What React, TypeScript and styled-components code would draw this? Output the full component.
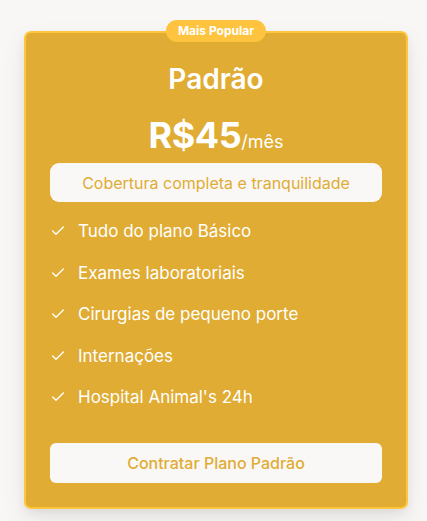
import React from "react";
import styled, { createGlobalStyle } from "styled-components";

const Global = createGlobalStyle`
  html, body { margin: 0; padding: 0; background: #f8f7f6; }
  body { font-family: Inter, "Noto Sans", sans-serif; -webkit-font-smoothing: antialiased; }
`;

const Page = styled.div`
  width: 427px;
  min-height: 521px;
  box-sizing: border-box;
  padding: 31px 19px 0 24px;
  background: #f8f7f6;
`;

const Card = styled.div`
  position: relative;
  width: 384px;
  height: 478px;
  box-sizing: border-box;
  border: 2px solid #ffc53d;
  border-radius: 7px;
  background: #e0ac33;
  padding: 29px 24px 24px;
  display: flex;
  flex-direction: column;
  align-items: stretch;
  box-shadow: 0 10px 25px rgba(0, 0, 0, 0.08), 0 4px 10px rgba(0, 0, 0, 0.05);
`;

const Badge = styled.div`
  position: absolute;
  top: -13px;
  left: 50%;
  transform: translateX(-50%);
  background: #ffc43f;
  color: #fff;
  font-size: 12px;
  font-weight: 700;
  line-height: 22px;
  height: 22px;
  padding: 0 12px;
  border-radius: 11px;
  white-space: nowrap;
`;

const Title = styled.h2`
  margin: 0;
  text-align: center;
  color: #fff;
  font-size: 28px;
  font-weight: 600;
  line-height: 34px;
`;

const Price = styled.div`
  margin-top: 19px;
  text-align: center;
  color: #fff;
  line-height: 40px;
`;

const Amount = styled.span`
  font-size: 36px;
  font-weight: 700;
  letter-spacing: -0.5px;
`;

const Period = styled.span`
  font-size: 18px;
  font-weight: 400;
`;

const Tagline = styled.div`
  margin-top: 1px;
  height: 39px;
  border-radius: 9px;
  background: #faf8f7;
  color: #e0ac33;
  font-size: 16px;
  display: flex;
  align-items: center;
  justify-content: center;
`;

const Features = styled.ul`
  list-style: none;
  margin: 17px 0 0;
  padding: 0;
  display: flex;
  flex-direction: column;
  gap: 17.5px;
`;

const Feature = styled.li`
  display: flex;
  align-items: center;
  gap: 12px;
  color: #fff;
  font-size: 17px;
  line-height: 24px;
`;

const CheckIcon = styled.svg`
  width: 16px;
  height: 16px;
  flex: none;
`;

const Cta = styled.button`
  margin-top: auto;
  height: 40px;
  border: none;
  border-radius: 6px;
  background: #faf8f7;
  color: #e0ac33;
  font-family: Inter, "Noto Sans", sans-serif;
  font-size: 16px;
  font-weight: 500;
  cursor: pointer;
`;

const features = [
  "Tudo do plano Básico",
  "Exames laboratoriais",
  "Cirurgias de pequeno porte",
  "Internações",
  "Hospital Animal's 24h",
];

const Check = () => (
  <CheckIcon viewBox="0 0 24 24" fill="none" stroke="#fff" strokeWidth={2} strokeLinecap="round" strokeLinejoin="round">
    <path d="M20 6 9 17l-5-5" />
  </CheckIcon>
);

export default function App() {
  return (
    <>
      <Global />
      <Page>
        <Card>
          <Badge>Mais Popular</Badge>
          <Title>Padrão</Title>
          <Price>
            <Amount>R$45</Amount>
            <Period>/mês</Period>
          </Price>
          <Tagline>Cobertura completa e tranquilidade</Tagline>
          <Features>
            {features.map((f) => (
              <Feature key={f}>
                <Check />
                {f}
              </Feature>
            ))}
          </Features>
          <Cta>Contratar Plano Padrão</Cta>
        </Card>
      </Page>
    </>
  );
}
